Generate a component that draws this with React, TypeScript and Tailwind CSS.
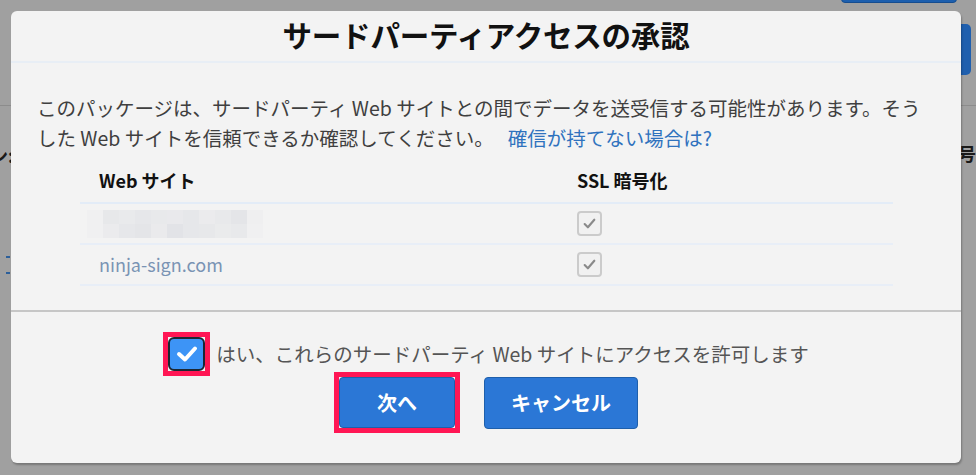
import React from 'react'

const jp = { fontFamily: '"Noto Sans CJK JP", "Noto Sans", sans-serif' }

const sites = [
    { id: 'hidden', name: null },
    { id: 'ninja', name: 'ninja-sign.com' },
]

// pixelated placeholder for the masked site name
const blur = [
    ['#f0f0f1', '#e7e8ea', '#e9eaec', '#e6e7ea', '#e8e9eb', '#e9e9ec', '#e6e7ea', '#ebebed', '#e8e9eb', '#e4e5e8', '#efeff0'],
    ['#f0f0f1', '#ebebed', '#e6e7ea', '#e4e5e8', '#eaeaec', '#e2e3e7', '#e6e7ea', '#e7e8ea', '#eaebec', '#e8e9eb', '#f0f0f1'],
]

function SslCheck() {
    return (
        <div className="w-[25px] h-[25px] shrink-0 rounded-[4px] border-2 border-[#cbcbcb] bg-[#f1f1f1] flex items-center justify-center">
            <svg width="15" height="15" viewBox="0 0 14 14">
                <path d="M2.5 7.5 L5.5 10.5 L11.5 3.5" fill="none" stroke="#8a8a8a" strokeWidth="2" strokeLinecap="round" strokeLinejoin="round" />
            </svg>
        </div>
    )
}

export default function App() {
    return (
        <div className="relative w-full h-[475px] bg-[#a0a0a0] overflow-hidden" style={jp}>
            {/* page behind the overlay */}
            <div className="absolute left-[841px] top-[-20px] w-[116px] h-[23px] rounded-[4px] bg-[#1d5fae] border border-[#164d8f]" />
            <div className="absolute left-[930px] top-[24px] w-[41px] h-[51px] rounded-[5px] bg-[#1f5fae]" />
            <div className="absolute left-0 right-0 top-[105px] h-px bg-[#8c8c8c]" />
            <div className="absolute left-[-10px] top-[142px] text-[18px] font-bold text-[#1a1a1a]">ン:</div>
            <div className="absolute left-[958px] top-[140px] text-[18px] font-bold text-[#1a1a1a]">号</div>
            <div className="absolute left-[6px] top-[256px] w-[4px] h-[2px] bg-[#2c5f9a]" />
            <div className="absolute left-[6px] top-[272px] w-[4px] h-[2px] bg-[#2c5f9a]" />

            <div className="relative pt-[11px] pl-[11px]">
                <div className="w-[950px] h-[452px] rounded-[6px] bg-[#f3f3f3] shadow-[1px_2px_2px_rgba(0,0,0,0.25)] flex flex-col overflow-hidden">
                    <div className="h-[52px] flex items-center justify-center border-b-2 border-[#e8eef5]">
                        <h1 className="text-[29.5px] font-bold text-[#111] leading-none tracking-[-0.2px] pb-[2px]">サードパーティアクセスの承認</h1>
                    </div>

                    <div className="h-[247px] pl-[26px] pt-[30px]">
                        <p className="text-[19.5px] leading-[30px] text-[#3f3f3f] whitespace-nowrap">
                            このパッケージは、サードパーティ Web サイトとの間でデータを送受信する可能性があります。そう
                            <br />
                            した Web サイトを信頼できるか確認してください。
                            <span className="ml-[14px] text-[#2f72be]">確信が持てない場合は?</span>
                        </p>

                        <div className="mt-[5px] ml-[43px] w-[813px]">
                            <div className="flex h-[46px] items-center border-b-2 border-[#e3ecf7] text-[18px] font-bold text-[#111]">
                                <div className="w-[497px] pl-[19px]">Web サイト</div>
                                <div>SSL 暗号化</div>
                            </div>
                            {sites.map((site) => (
                                <div key={site.id} className="flex h-[41px] items-center border-b-2 border-[#e8eef7]">
                                    <div className="w-[497px] pl-[7px]">
                                        {site.name ? (
                                            <span className="pl-[12px] text-[18px] text-[#7a93b4]">{site.name}</span>
                                        ) : (
                                            <div className="flex flex-col">
                                                {blur.map((row, ri) => (
                                                    <div key={ri} className="flex">
                                                        {row.map((c, ci) => (
                                                            <div key={ci} className="w-[16px] h-[14px]" style={{ background: c }} />
                                                        ))}
                                                    </div>
                                                ))}
                                            </div>
                                        )}
                                    </div>
                                    <SslCheck />
                                </div>
                            ))}
                        </div>
                    </div>

                    <div className="flex-1 border-t-2 border-[#c6c6c6] flex flex-col items-center pt-[20px]">
                        <label className="flex items-center gap-[6px]">
                            <span className="border-[5px] border-[#ff1654] p-0 flex">
                                <span className="w-[37px] h-[34px] rounded-[6px] bg-[#3d94f6] border-2 border-[#1c2733] flex items-center justify-center">
                                    <svg width="24" height="20" viewBox="0 0 24 20">
                                        <path d="M4 10 L10 15.5 L20 4.5" fill="none" stroke="#fff" strokeWidth="4" strokeLinecap="round" strokeLinejoin="round" />
                                    </svg>
                                </span>
                            </span>
                            <span className="text-[19.5px] text-[#555]">はい、これらのサードパーティ Web サイトにアクセスを許可します</span>
                        </label>

                        <div className="mt-[-4px] flex items-start gap-[24px]">
                            <div className="border-[5px] border-[#ff1654] flex">
                                <button className="w-[116px] h-[51px] rounded-[4px] bg-[#2b77d6] border border-[#1e5fab] text-white text-[20px] font-bold">次へ</button>
                            </div>
                            <button className="mt-[5px] w-[154px] h-[52px] rounded-[4px] bg-[#2b77d6] border border-[#1e5fab] text-white text-[20px] font-bold">キャンセル</button>
                        </div>
                    </div>
                </div>
            </div>
        </div>
    )
}
